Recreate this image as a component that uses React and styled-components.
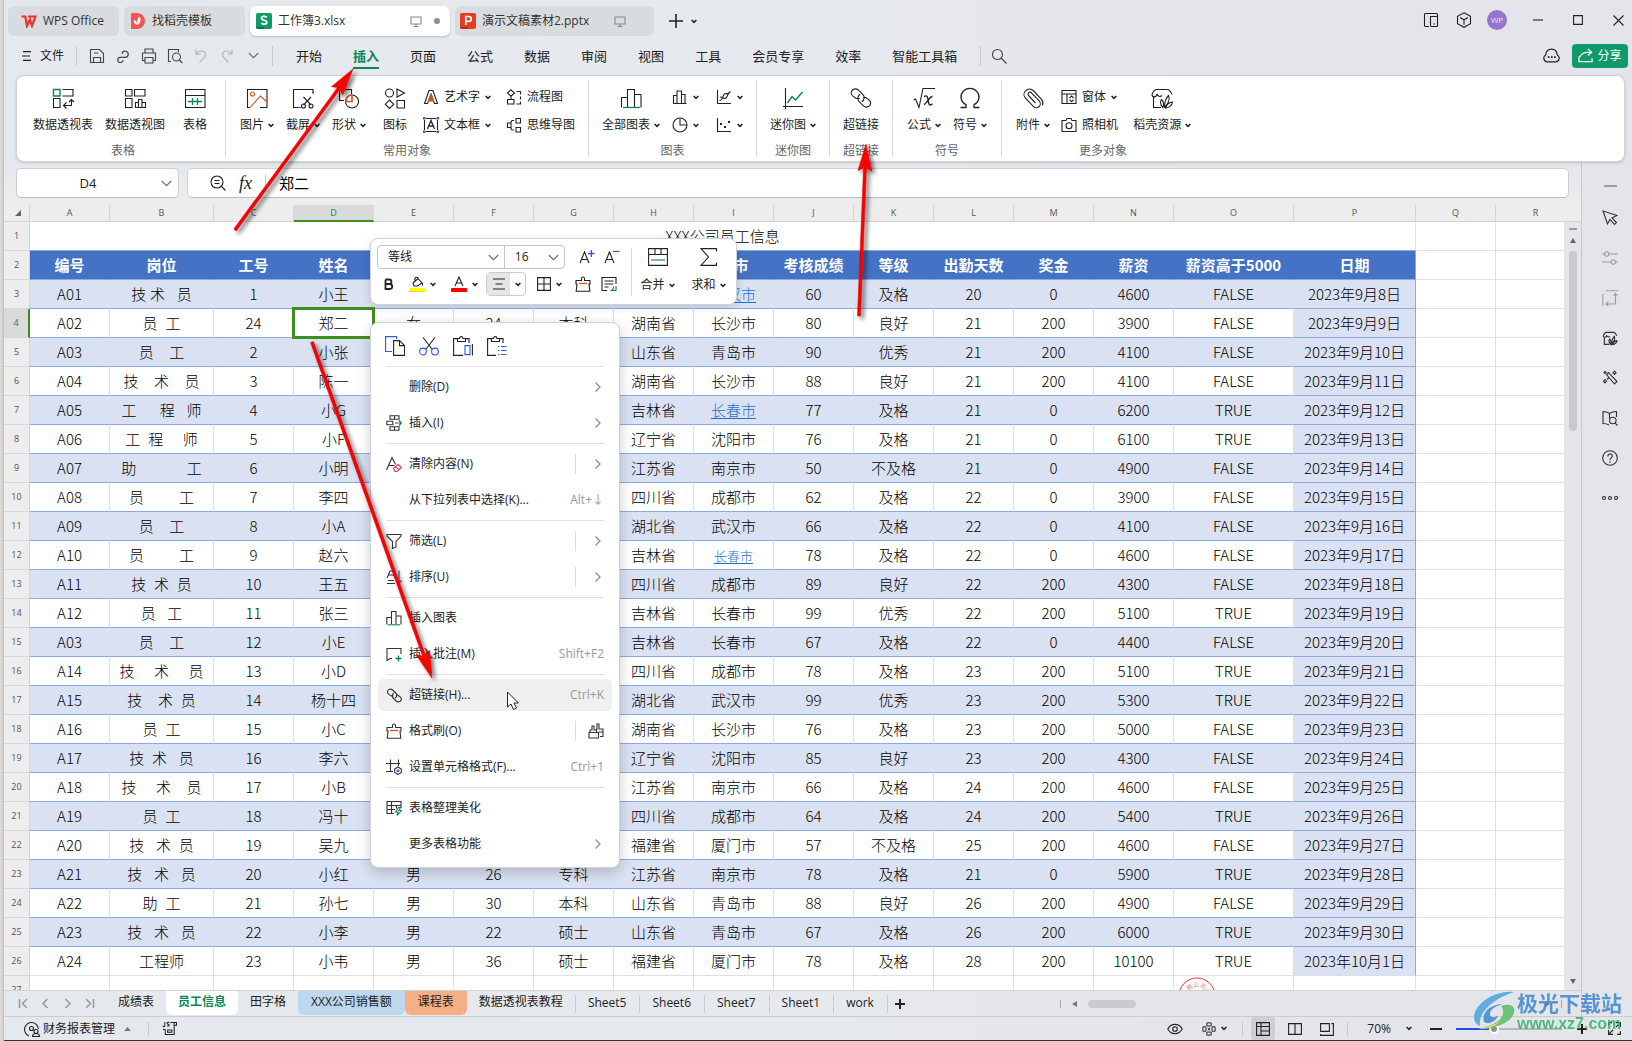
import React from 'react'
import styled, { createGlobalStyle, css } from 'styled-components'

const green = '#0b8457'
const blue = '#2b5cd9'
const orange = '#d4541c'
const uiFont = '"Open Sans", "Noto Sans CJK SC", sans-serif'
const cellFont = '"Noto Sans CJK SC", sans-serif'

const GlobalStyle = createGlobalStyle`
  * { box-sizing: border-box; }
  body { margin: 0; font-family: ${uiFont}; font-size: 12px; line-height: 18px; color: #222; }
  button, input, select { font: inherit; color: inherit; margin: 0; }
`

/* ---------- window ---------- */

const Desktop = styled.div`
  position: relative;
  height: 100vh;
  padding-left: 4px;
  overflow: hidden;
  background: linear-gradient(90deg, #e2dedb, #d2cecb 3px, #b4b6b8 4px);
`

const Window = styled.div`
  height: 100%;
  display: flex;
  flex-direction: column;
  background: linear-gradient(90deg, #e5e8ec, #e6e9ed 50%, #e4e5ea 75%);
`

const Body = styled.div`
  flex: 1;
  min-height: 0;
  display: flex;
`

const Main = styled.main`
  flex: 1;
  min-width: 0;
  display: flex;
  flex-direction: column;
`

const PlainButton = styled.button`
  display: flex;
  align-items: center;
  justify-content: center;
  padding: 0;
  border: none;
  background: none;
  cursor: pointer;
`

const Svg = styled.svg`
  display: block;
  flex: none;
  fill: none;
  stroke: currentColor;
  stroke-width: ${p => p.$stroke || 1.1};
`

const Spacer = styled.div`
  flex: 1;
`

const Divider = styled.span`
  flex: none;
  width: 1px;
  height: ${p => p.$height || 20}px;
  background: ${p => p.$color || '#c9cbce'};
`

/* ---------- title bar ---------- */

const TitleBar = styled.header`
  flex: none;
  height: 36px;
  padding: 6px 0 0 4px;
  display: flex;
  gap: 5px;
`

const FileTab = styled.button`
  display: flex;
  align-items: center;
  gap: 6px;
  width: ${p => p.$width}px;
  height: 30px;
  padding: 0 10px 0 ${p => p.$inset || 6}px;
  border: none;
  border-radius: 6px;
  background: ${p => (p.$active ? '#fff' : '#d9dcdf')};
  box-shadow: ${p => (p.$active ? '0 1px 2px rgba(0, 0, 0, 0.2)' : 'none')};
  text-align: left;
  white-space: nowrap;
  color: #333;
`

const TabName = styled.span`
  flex: 1;
`

const Dot = styled.span`
  width: 6px;
  height: 6px;
  margin-left: 6px;
  border-radius: 50%;
  background: #8d8f91;
`

const AddTab = styled.div`
  display: flex;
  align-items: center;
  gap: 8px;
  padding: 0 10px;
`

const WindowButtons = styled.div`
  display: flex;
  align-items: center;
  gap: ${p => (p.$controls ? 12 : 5)}px;
  margin-left: ${p => (p.$controls ? 8 : 0)}px;
  height: 28px;
`

const WindowButton = styled(PlainButton)`
  width: 28px;
  height: 28px;
`

const Avatar = styled.span`
  width: 20px;
  height: 20px;
  border-radius: 50%;
  background: #9575cd;
  color: #e9e0f7;
  font-size: 8px;
  line-height: 20px;
  text-align: center;
`

/* ---------- menu bar ---------- */

const MenuBar = styled.nav`
  flex: none;
  height: 39px;
  padding: 0 4px 0 18px;
  display: flex;
  align-items: center;
`

const FileMenu = styled(PlainButton)`
  gap: 8px;
  margin-right: 12px;
`

const QuickTools = styled.div`
  display: flex;
  align-items: center;
  padding: 0 6px 0 7px;
`

const QuickTool = styled(PlainButton)`
  width: ${p => (p.$wide ? 36 : 26)}px;
  height: 24px;
  color: ${p => (p.$off ? '#b0b2b5' : '#444')};
`

const MenuList = styled.div`
  display: flex;
  gap: 31px;
  margin: 0 23px;
`

const MenuTab = styled(PlainButton)`
  height: 26px;
  padding-top: 2px;
  border-bottom: 2px solid ${p => (p.$active ? green : 'transparent')};
  font-size: 13px;
  white-space: nowrap;
  font-weight: ${p => (p.$active ? 700 : 400)};
  color: ${p => (p.$active ? green : '#222')};
`

const ShareButton = styled(PlainButton)`
  gap: 4px;
  width: 56px;
  height: 24px;
  margin-left: 12px;
  border-radius: 4px;
  background: #0f9b69;
  color: #fff;
`

/* ---------- ribbon ---------- */

const Ribbon = styled.section`
  flex: none;
  height: 87px;
  margin: 0 7px 0 12px;
  display: flex;
  background: #fff;
  border: 1px solid #cfd1d6;
  border-radius: 8px;
  box-shadow: 0 1px 3px rgba(0, 0, 0, 0.16);
  position: relative;
`

const Group = styled.div`
  display: flex;
  flex-direction: column;
  padding: 0 13px;
  ${p => p.$roomy && css`padding: 0 12px 0 16px;`}
`

const GroupBody = styled.div`
  flex: 1;
  display: flex;
  gap: ${p => p.$gap || 10}px;
`

const GroupTitle = styled.div`
  text-align: center;
  color: #666;
  padding-bottom: 1px;
`

const GroupLine = styled.span`
  width: 1px;
  margin: 4px 0;
  background: #d9dbde;
`

const BigTool = styled.button`
  display: flex;
  flex-direction: column;
  align-items: center;
  gap: 6px;
  min-width: 36px;
  padding: 10px 0 0;
  border: none;
  background: none;
  white-space: nowrap;
`

const BigLabel = styled.span`
  display: flex;
  align-items: center;
  gap: 4px;
`

const ToolStack = styled.div`
  display: flex;
  flex-direction: column;
  padding: 7px 5px 0 0;
  &:last-child { padding-right: 0; }
`

const SmallTool = styled(PlainButton)`
  justify-content: flex-start;
  gap: 5px;
  height: 28px;
  white-space: nowrap;
`

/* ---------- formula bar ---------- */

const FormulaBar = styled.div`
  flex: none;
  display: flex;
  gap: 8px;
  padding: 6px 12px 7px;
  background: linear-gradient(180deg, rgba(238, 238, 238, 0), #ededed);
`

const NameBox = styled.div`
  display: flex;
  align-items: center;
  width: 163px;
  height: 30px;
  padding: 0 6px 0 8px;
  background: #fff;
  border: 1px solid #cdcfd1;
  border-bottom-color: #b9bbbd;
  border-radius: 5px;
`

const NameInput = styled.input`
  flex: 1;
  min-width: 0;
  padding: 0 10px 0 0;
  border: none;
  outline: none;
  background: none;
  text-align: center;
  font-size: 13px;
`

const FormulaBox = styled(NameBox)`
  flex: 1;
  gap: 13px;
  padding-left: 22px;
`

const FormulaMark = styled.span`
  font-family: "Liberation Serif", serif;
  font-style: italic;
  font-size: 18px;
`

const FormulaInput = styled.input`
  flex: 1;
  padding: 0;
  border: none;
  outline: none;
  background: none;
  font-family: ${cellFont};
  font-size: 15px;
  color: #000;
`

/* ---------- sheet ---------- */

const SheetArea = styled.div`
  flex: 1;
  min-height: 0;
  display: flex;
`

const TableWrap = styled.div`
  flex: 1;
  min-width: 0;
  overflow: hidden;
  background: #fff;
`

const Grid = styled.table`
  width: 100%;
  table-layout: fixed;
  border-collapse: separate;
  border-spacing: 0;
  font-family: ${cellFont};
  font-size: 15px;
  line-height: 20px;
  color: #000;
`

const ColHead = styled.th`
  height: 17px;
  padding: 0;
  background: ${p => (p.$active ? '#dadada' : '#ededed')};
  border-right: 1px solid ${p => (p.$active ? '#dadada' : '#d4d4d4')};
  border-bottom: ${p => (p.$active ? '2px solid #3f8f1f' : '1px solid #d4d4d4')};
  font-family: ${uiFont};
  font-size: 9px;
  line-height: 12px;
  font-weight: 400;
  color: ${p => (p.$active ? green : '#555')};
`

const Corner = styled(ColHead)`
  text-align: right;
  padding-right: 8px;
`

const RowHead = styled.th`
  height: 29px;
  padding: 0;
  background: ${p => (p.$active ? '#dadada' : '#ededed')};
  border-right: ${p => (p.$active ? '2px solid #3f8f1f' : '1px solid #d4d4d4')};
  border-bottom: 1px solid #d8d8d8;
  font-family: ${uiFont};
  font-size: 9px;
  font-weight: 400;
  color: ${p => (p.$active ? green : '#555')};
`

const Cell = styled.td`
  position: relative;
  height: 29px;
  padding: 0;
  text-align: center;
  white-space: pre;
  font-weight: 300;
  border-right: 1px solid #e1e1e1;
  border-bottom: 1px solid #e1e1e1;
  ${p => p.$data && css`border-bottom-color: #8ea9db;`}
  ${p => p.$last && css`border-bottom-color: #dcdfe6;`}
  ${p => p.$band && css`background: #d9e1f2; border-right-color: #d9e1f2;`}
  ${p => p.$head && css`
    background: #4472c4;
    border-right-color: #4472c4;
    color: #fff;
    font-weight: 700;
  `}
  ${p => p.$edge && css`border-right-color: #8ea9db;`}
  ${p => p.$spaced && css`font-family: ${uiFont};`}
`

const Selection = styled.span`
  position: absolute;
  z-index: 1;
  inset: -2px;
  border: 3px solid #3f8f1f;
`

const CityLink = styled.a`
  color: #1c73c7;
  font-size: ${p => (p.$small ? 13 : 15)}px;
  text-underline-offset: 2px;
`

const Seal = styled.svg`
  position: absolute;
  left: 4px;
  top: 1px;
  fill: none;
  stroke: #e03a3a;
`

const VScroll = styled.div`
  width: 17px;
  display: flex;
  flex-direction: column;
  align-items: center;
  gap: 8px;
  padding: 6px 0;
  margin-top: 16px;
  border-top: 1px solid #d4d4d4;
  color: #777;
  box-shadow: 0 -16px 0 #ededed;
`

const VThumb = styled.span`
  width: 8px;
  height: 180px;
  border-radius: 4px;
  background: #c9cacd;
`

const Dash = styled.span`
  width: ${p => p.$width}px;
  height: 2px;
  background: #9a9ca0;
`

const SideBar = styled.aside`
  flex: none;
  width: 51px;
  padding: 12px 0 0 6px;
  display: flex;
  flex-direction: column;
  align-items: center;
  border-left: 1px solid #c8cace;
`

const SideButton = styled(PlainButton)`
  width: 40px;
  height: ${p => (p.$short ? 24 : 40)}px;
  color: ${p => (p.$off ? '#9b9da2' : '#333')};
`

/* ---------- sheet tabs and status ---------- */

const SheetBar = styled.div`
  flex: none;
  height: 26px;
  display: flex;
  border-top: 1px solid #d0d2d4;
`

const SheetNav = styled.div`
  display: flex;
  align-items: center;
  width: 102px;
  padding-left: 8px;
  color: #9a9c9f;
`

const SheetNavButton = styled(PlainButton)`
  width: 22px;
  height: 24px;
`

const SheetTab = styled.button`
  height: 24px;
  padding: 0 12px 2px;
  border: none;
  border-radius: 0 0 6px 6px;
  background: ${p => p.$tint || 'none'};
  font-weight: ${p => (p.$active ? 700 : 400)};
  color: ${p => (p.$active ? green : '#222')};
  white-space: nowrap;
  ${p => p.$tint && !p.$active && css`padding: 0 13px 2px;`}
  ${p => p.$ruled && css`
    height: 18px;
    margin-top: 4px;
    padding: 0 13px 2px 12px;
    border-left: 1px solid #c9cbce;
    border-radius: 0;
    line-height: 16px;
  `}
`

const AddSheet = styled(PlainButton)`
  height: 18px;
  margin-top: 4px;
  padding: 0 7px;
  border-left: 1px solid #c9cbce;
`

const HScroll = styled.div`
  width: 502px;
  display: flex;
  align-items: center;
  gap: 11px;
  margin-right: 19px;
  color: #777;
`

const HThumb = styled.span`
  width: 48px;
  height: 8px;
  border-radius: 4px;
  background: #c9cacd;
`

const StatusBar = styled.footer`
  flex: none;
  height: 25px;
  display: flex;
  align-items: center;
  padding: 0 2px 0 19px;
  border-top: 1px solid #c9cbce;
  border-bottom: 1px solid #1f3b40;
`

const StatusLine = styled(Divider)`
  margin: 0 4px;
  height: 14px;
`

const StatusButton = styled(PlainButton)`
  gap: 5px;
  min-width: 24px;
  height: 23px;
  margin: 0 4px;
  padding: 0 ${p => (p.$spread ? 7 : 0)}px;
  border-radius: 3px;
  background: ${p => (p.$active ? '#cdcfd2' : 'none')};
`

const ReportButton = styled(StatusButton)`
  margin: 0 9px 0 0;
  gap: 2px;
`

const ZoomSelect = styled(StatusButton)`
  gap: 15px;
  margin: 0 8px 0 15px;
`

const ZoomRange = styled.input`
  appearance: none;
  width: 106px;
  height: 16px;
  margin: 0 4px;
  background: linear-gradient(90deg, #1f52e0 34%, #b5b8bc 34%) center / 100% 2px no-repeat;
  &::-webkit-slider-thumb {
    appearance: none;
    width: 10px;
    height: 10px;
    border: 2px solid #fff;
    border-radius: 50%;
    background: #8f9296;
  }
`

/* ---------- floating toolbar ---------- */

const FloatBar = styled.div`
  position: absolute;
  z-index: 3;
  left: 370px;
  top: 238px;
  width: 367px;
  height: 67px;
  display: flex;
  padding: 6px 0 0 6px;
  background: #fff;
  border: 1px solid #cfd2d8;
  border-radius: 8px;
  box-shadow: 0 2px 10px rgba(0, 0, 0, 0.14);
`

const FloatRows = styled.div`
  width: 248px;
`

const FloatRow = styled.div`
  display: flex;
  align-items: center;
  height: 24px;
  margin-bottom: 3px;
`

const SelectBox = styled.label`
  display: grid;
  align-items: center;
  width: ${p => p.$width}px;
  height: 24px;
  border: 1px solid #c2c4c8;
  border-radius: ${p => (p.$left ? '4px 0 0 4px' : '0 4px 4px 0')};
  margin-right: ${p => (p.$left ? -1 : 9)}px;
  & > * { grid-area: 1 / 1; }
  & > svg { justify-self: end; margin-right: 5px; pointer-events: none; }
`

const Select = styled.select`
  appearance: none;
  height: 22px;
  padding: 0 10px;
  border: none;
  outline: none;
  background: none;
`

const FloatTool = styled(PlainButton)`
  gap: 5px;
  width: ${p => p.$width}px;
  height: 24px;
`

const AlignTool = styled.div`
  display: flex;
  width: 40px;
  height: 24px;
  margin: 0 2px 0 1px;
  border: 1px solid #c9cbce;
  border-radius: 4px;
  & > button:first-child { width: 23px; background: #e4e5e6; }
  & > button:last-child { width: 15px; }
`

const FloatSide = styled.div`
  display: flex;
  flex: 1;
  height: 48px;
  margin: 3px 2px 0 6px;
  border-left: 1px solid #d3d5d8;
`

const FloatBig = styled.button`
  flex: 1;
  display: flex;
  flex-direction: column;
  align-items: center;
  gap: 10px;
  padding: 0;
  border: none;
  background: none;
`

/* ---------- context menu ---------- */

const ContextMenu = styled.div`
  position: absolute;
  z-index: 4;
  left: 370px;
  top: 322px;
  width: 250px;
  display: flex;
  flex-direction: column;
  padding-bottom: 5px;
  background: #fff;
  border: 1px solid #cfd2d8;
  border-radius: 8px;
  box-shadow: 0 4px 14px rgba(0, 0, 0, 0.2);
`

const ClipRow = styled.div`
  display: flex;
  gap: 10px;
  height: 41px;
  padding: 4px 12px 0;
`

const ClipButton = styled(PlainButton)`
  width: 24px;
`

const MenuLine = styled.div`
  height: 1px;
  margin: 2px 15px;
  background: #dfe0e2;
`

const MenuItem = styled.button`
  display: flex;
  align-items: center;
  gap: 7px;
  height: 32px;
  margin: 2px 7px;
  padding: 0 8px;
  border: none;
  border-radius: 5px;
  background: ${p => (p.$hover ? '#efefef' : 'none')};
  text-align: left;
  white-space: nowrap;
`

const ItemIcon = styled.span`
  width: 16px;
  color: #333;
`

const Shortcut = styled.span`
  color: #999;
`

const ItemTail = styled.span`
  display: flex;
  justify-content: flex-end;
  width: 29px;
  height: 20px;
  align-items: center;
  color: #8b8d90;
  border-left: 1px solid ${p => (p.$split ? '#d9dbdd' : 'transparent')};
`

/* ---------- marks lying over the page ---------- */

const Marks = styled.svg`
  position: absolute;
  z-index: 5;
  inset: 0;
  width: 100%;
  height: 100%;
  pointer-events: none;
`

const Brand = styled.div`
  position: absolute;
  z-index: 6;
  right: 10px;
  bottom: 7px;
  display: flex;
  gap: 2px;
  opacity: 0.85;
  pointer-events: none;
`

const BrandText = styled.div`
  color: #34b368;
  font: 700 16px/20px "Liberation Sans", sans-serif;
`

const BrandName = styled.div`
  color: #4088cc;
  font: 700 21px/24px ${cellFont};
`

/* ---------- icons ---------- */

const Icon = ({ s = 16, box = s, stroke, children }) => (
  <Svg width={s} height={s} viewBox={`0 0 ${box} ${box}`} $stroke={stroke}>{children}</Svg>
)

const Chev = () => (
  <Svg width="6" height="5" viewBox="0 0 6 5" $stroke={1.5}><path d="M.6 1l2.400 2.400L5.400 1" /></Svg>
)

const ChevDown = () => (
  <Svg width="11" height="7" viewBox="0 0 11 7" color="#6b6d70"><path d="M.8 1l4.700 4.700L10.200 1" /></Svg>
)

const big = {
  pivot: <><path stroke={green} strokeWidth="1.400" d="M2.500 3.500H9V10H2.500z" /><path d="M11.500 3.500h10.500v6.500h-10.500M2.500 12.500H9v9H2.500zM12.500 19.500h8v-6M15.500 16.500l-3 3 3 3M18 16l2.500-2.500L23 16" /></>,
  pivotChart: <><path d="M2.500 3.500H9V10H2.500zM11.500 10V3.500H22V10zM2.500 12.500H9v9H2.500zM12.500 21.500v-5h3v5zM15.500 21.500v-8h3.500v8zM19 16.500h3.500v5H12" /></>,
  table: <><path d="M2.500 3.500h19.500v18H2.500zM2.500 9.500H22" /><path stroke={green} strokeWidth="1.300" d="M5 15.500h14M9.500 12v7M14.500 12v7" /></>,
  picture: <><path d="M5 21.500H2.500v-18H22v18h-7" /><circle cx="7.500" cy="8" r="2" stroke={orange} /><path stroke={orange} d="M5 21.500L15.500 10l6.500 6" /></>,
  snip: <><path d="M8 21.500H2.500v-18h19.500V7M12.500 11l7.500 8M20 11l-7.500 8" /><circle cx="12.500" cy="20" r="2" /><circle cx="20" cy="20" r="2" /><path stroke={blue} d="M22 5v3M7 21.500h3" /></>,
  shapes: <><path d="M7 14.500H2.500v-11h12V8" /><circle cx="15" cy="15.500" r="6.500" /><path stroke={orange} strokeWidth="1.600" d="M9 15.500h6V9c-4 0-6 3-6 6.500z" /></>,
  marks: <><circle cx="6.500" cy="7" r="4" /><path d="M14 3l7.500 4L14 11zM6.500 14l4.200 4.200-4.200 4.200-4.200-4.200zM14 14.500h7.500V22H14z" /></>,
  bars: <><path d="M2.500 21.500v-10H8.500v10M8.500 11.500v-8h7v18M15.500 8.500H22v13" /><path stroke={green} strokeWidth="1.300" d="M4 21.500h17" /></>,
  spark: <><path d="M4.500 2v21M2 20.500h20" /><path stroke={green} strokeWidth="1.400" d="M6.500 17l4.500-6.500 3.500 3.500L21.500 6" /></>,
  link: <><path d="M10.500 12.500H7.200C3.500 10.500 1.800 8.500 2.200 6.200c.6-3.300 4.800-4.300 7.200-2l4.200 3.900c2.400 2.300 2 5.900-.8 7.600" /><path d="M14.500 11.500h2.200c3.500 2 5.300 4 4.900 6.300-.6 3.300-4.800 4.300-7.200 2l-4-3.900c-2.400-2.300-2-5.700.6-7.600" /></>,
  sqrt: <><path d="M1.500 14l2-1 3.500 8.500L11 2.500h12" /><path d="M12 10.500c3-1.500 3.500 0 4 3l.8 4c.5 2 2 2 3.700.3M20.500 10.500c-3-.5-5.500 7.500-8.500 8" strokeWidth="1.400" /></>,
  omega: <path d="M2.500 21.500h5.500v-2.800A9 8.600 0 1 1 16 18.700v2.800h5.500" strokeWidth="1.300" />,
  clip: <path d="M14.500 17L7.500 9.500a2 2 0 0 1 3-2.700l7.800 8.300a4 4 0 0 1-6 5.300L4.200 12a5.500 5.500 0 0 1 8-7.500l8.300 8.900a6 6 0 0 1 1 6" />,
  store: <><path d="M3.500 11v10.500h7.500M2 8.500C3 6 4 3.500 6.500 3.500h11c2.500 0 3.500 3 4.500 5M2 8.500c0 3 4.500 3.500 5-.5.500 2 3 3.500 5 1.500" /><path d="M13 21.500c-3-3-3-6-1.500-8 2 2 2.500 5 1.500 8zM14.500 21c0-5 1-8.500 4-11.500 1.500 4-.5 8.500-4 11.500zM15.500 22c1-3.500 3.500-5.500 7-6-.5 3.500-3 5.500-7 6z" /></>,
}

const small = {
  art: <><path d="M1.500 14.500L6 1.500h4l4.500 13h-3L8 5 4.500 14.500z" /><path fill={orange} stroke={orange} d="M5.500 12h5L8 6z" /></>,
  textbox: <><path d="M3 1.500h10M3 14.500h10M1.500 3v10M14.500 3v10" /><path d="M4.500 12L8 3.500l3.500 8.500M6 9h4" strokeWidth="1.300" /><path stroke="none" fill={blue} d="M0 0h2.500v2.500H0zM13.500 0H16v2.500h-2.500zM0 13.500h2.500V16H0zM13.500 13.500H16V16h-2.500z" /></>,
  flow: <><path d="M5 .8L8.500 4 5 7.200 1.500 4zM1.500 10.500H8V15H1.500zM5 7.200v3.300M10.500 2.500h4v3M14.500 7.500v3M14.500 12.500V15h-4" /></>,
  mind: <><path d="M10 1.500h4.500V6H10zM10 10.500h4.500V15H10zM8 3.500H6.500C5 3.500 5 6 5 6M8 13H6.500C5 13 5 10.500 5 10.500M5 6H1.500v4.500H5z" /></>,
  column: <><path d="M1.500 14V6.500H5V14M5 6.500V2h4.500v12M9.500 5.500H13V14M1 14.500h13.500" /></>,
  pie: <><circle cx="8" cy="8" r="7" /><path d="M8 1v7h7" /></>,
  line: <><path d="M1.500 1v13.500H15M3.500 11.500c4 0 3-7 6-7 2 0 2 1 4-1M4 8c3-.5 4 3 6 1s1-4 4.500-6.500" /></>,
  scatter: <><path d="M1.500 1v13.500H15" /><path stroke="none" fill="currentColor" d="M4 6h2v2H4zM8 9h2v2H8zM12 4h2v2h-2z" /></>,
  form: <><path d="M1 1.500h14v13H1zM1 5h14M6 5v9.500M8.500 9l2-2 2 2M8.500 10.700l2 2 2-2" /></>,
  camera: <><path d="M1 3.500h4L6 1.500h4l1 2h4v11H1z" /><circle cx="8" cy="8.800" r="3" /></>,
}

const menuIcon = {
  insert: <><path d="M4 .8h4.500v3.500H4zM8.500.8H13v3.500H8.500M.8 6.200h6v3.600h-6zM4 11.800h4.500v3.500H4zM8.500 11.800H13v3.500H8.500" /><path stroke={green} d="M9 8h6.500M13 5.500L15.500 8 13 10.500" /></>,
  clear: <><path d="M.5 14L6 1.500l3.500 7M2.500 9.500h6" /><path stroke="#d4405c" d="M7.500 12.500l4.500-4 3.500 3-4.500 4H9zM9.500 10.700l3.500 3.200" /></>,
  filter: <path d="M1 1.500h14v1.500l-5 5.500v5.500l-3.500 1.500V8.500L1 3z" />,
  sort: <><path d="M1 9l3-7h3l2 7M2 6h6M1 14.500h8M2 11.500h6" /><path stroke={blue} d="M13 1.500v12.500M10.500 11.500l2.500 2.500 2.500-2.500" /></>,
  chart: <><path d="M.8 14.500V7.500H5.500M5.500 14V1.500h4.500V14M10 6h5v8.500" /><path stroke={green} d="M2 14.800h12" /></>,
  note: <><path d="M6 12.500H4L1 14.500V2.500h14V8" /><path stroke={green} strokeWidth="1.400" d="M9.500 12.500h6M12.500 9.500v6" /></>,
  brush: <><path d="M6.500 4.500v-2a1.500 1.500 0 0 1 3 0v2h5.500v3.500h-1l.8 7.200H1.200L2 8H1V4.500z" /><path stroke={orange} strokeWidth="1.300" d="M4 7.500h8" /></>,
  format: <><path d="M4.500.5V13M0 4.500h14M12.500.5V7M0 12.500h7" /><path d="M12 8l3.300 2v3.500L12 15.500l-3.300-2V10z" /><circle cx="12" cy="11.800" r="1" stroke={blue} /></>,
  tidy: <><path d="M8 13.500H1V1.500h14V8M1 5.500h14M1 9.500h8M5.500 1.500v12M10.500 5.500v3" /><path stroke={green} fill="#fff" d="M12.500 7.500l-3 4.500h2.500l-1 3.500 4.500-5h-2.500l1.500-3z" /></>,
  brushes: <><path d="M1 9.500h9.500V15H1zM2 9V7h2V3h2v4h2.500v2M8 6h1V1h2v5h4v7.500h-3M11 9h4" /></>,
}

/* ---------- data ---------- */

const letters = 'ABCDEFGHIJKLMNOPQR'.split('')
const widths = [80, 104, 80, 80, 80, 80, 80, 80, 80, 80, 80, 80, 80, 80, 120, 122, 80, 80]
const headings = ['编号', '岗位', '工号', '姓名', '', '', '', '', '城市', '考核成绩', '等级', '出勤天数', '奖金', '薪资', '薪资高于5000', '日期']

const staff = [
  ['A01', '技 术   员', 1, '小王', '', '', '', '', '武汉市', 60, '及格', 20, 0, 4600, 'FALSE', '2023年9月8日'],
  ['A02', '员  工', 24, '郑二', '女', 24, '本科', '湖南省', '长沙市', 80, '良好', 21, 200, 3900, 'FALSE', '2023年9月9日'],
  ['A03', '员    工', 2, '小张', '', '', '', '山东省', '青岛市', 90, '优秀', 21, 200, 4100, 'FALSE', '2023年9月10日'],
  ['A04', '技    术    员', 3, '陈一', '', '', '', '湖南省', '长沙市', 88, '良好', 21, 200, 4100, 'FALSE', '2023年9月11日'],
  ['A05', '工      程   师', 4, '小G', '', '', '', '吉林省', '长春市', 77, '及格', 21, 0, 6200, 'TRUE', '2023年9月12日'],
  ['A06', '工  程     师', 5, '小F', '', '', '', '辽宁省', '沈阳市', 76, '及格', 21, 0, 6100, 'TRUE', '2023年9月13日'],
  ['A07', '助             工', 6, '小明', '', '', '', '江苏省', '南京市', 50, '不及格', 21, 0, 4900, 'FALSE', '2023年9月14日'],
  ['A08', '员         工', 7, '李四', '', '', '', '四川省', '成都市', 62, '及格', 22, 0, 3900, 'FALSE', '2023年9月15日'],
  ['A09', '员    工', 8, '小A', '', '', '', '湖北省', '武汉市', 66, '及格', 22, 0, 4100, 'FALSE', '2023年9月16日'],
  ['A10', '员         工', 9, '赵六', '', '', '', '吉林省', '长春市', 78, '及格', 22, 0, 4600, 'FALSE', '2023年9月17日'],
  ['A11', '技  术  员', 10, '王五', '', '', '', '四川省', '成都市', 89, '良好', 22, 200, 4300, 'FALSE', '2023年9月18日'],
  ['A12', '员   工', 11, '张三', '', '', '', '吉林省', '长春市', 99, '优秀', 22, 200, 5100, 'TRUE', '2023年9月19日'],
  ['A03', '员    工', 12, '小E', '', '', '', '吉林省', '长春市', 67, '及格', 22, 0, 4400, 'FALSE', '2023年9月20日'],
  ['A14', '技     术     员', 13, '小D', '', '', '', '四川省', '成都市', 78, '及格', 23, 200, 5100, 'TRUE', '2023年9月21日'],
  ['A15', '技    术  员', 14, '杨十四', '', '', '', '湖北省', '武汉市', 99, '优秀', 23, 200, 5300, 'TRUE', '2023年9月22日'],
  ['A16', '员  工', 15, '小C', '', '', '', '湖南省', '长沙市', 76, '及格', 23, 200, 5000, 'FALSE', '2023年9月23日'],
  ['A17', '技  术   员', 16, '李六', '', '', '', '辽宁省', '沈阳市', 85, '良好', 23, 200, 4300, 'FALSE', '2023年9月24日'],
  ['A18', '技     术    员', 17, '小B', '', '', '', '江苏省', '南京市', 66, '及格', 24, 200, 4600, 'FALSE', '2023年9月25日'],
  ['A19', '员  工', 18, '冯十', '', '', '', '四川省', '成都市', 64, '及格', 24, 200, 5400, 'TRUE', '2023年9月26日'],
  ['A20', '技   术  员', 19, '吴九', '', '', '', '福建省', '厦门市', 57, '不及格', 25, 200, 4600, 'FALSE', '2023年9月27日'],
  ['A21', '技   术   员', 20, '小红', '男', 26, '专科', '江苏省', '南京市', 78, '及格', 21, 0, 5900, 'TRUE', '2023年9月28日'],
  ['A22', '助  工', 21, '孙七', '男', 30, '本科', '山东省', '青岛市', 88, '良好', 26, 200, 4900, 'FALSE', '2023年9月29日'],
  ['A23', '技   术   员', 22, '小李', '男', 22, '硕士', '山东省', '青岛市', 67, '及格', 26, 200, 6000, 'TRUE', '2023年9月30日'],
  ['A24', '工程师', 23, '小韦', '男', 36, '硕士', '福建省', '厦门市', 78, '及格', 28, 200, 10100, 'TRUE', '2023年10月1日'],
]

const linkedRows = [3, 7, 12]

const menus = ['开始', '插入', '页面', '公式', '数据', '审阅', '视图', '工具', '会员专享', '效率', '智能工具箱']

const sheets = [
  { name: '成绩表' },
  { name: '员工信息', active: true, tint: '#fff' },
  { name: '田字格' },
  { name: 'XXX公司销售额', tint: '#bdd7ee' },
  { name: '课程表', tint: '#f4b084' },
  { name: '数据透视表教程' },
  { name: 'Sheet5', ruled: true },
  { name: 'Sheet6', ruled: true },
  { name: 'Sheet7', ruled: true },
  { name: 'Sheet1', ruled: true },
  { name: 'work', ruled: true },
]

const menuSections = [
  [{ text: '删除(D)', more: true }, { text: '插入(I)', icon: 'insert', more: true }],
  [{ text: '清除内容(N)', icon: 'clear', more: true, split: true }, { text: '从下拉列表中选择(K)...', keys: 'Alt+↓' }],
  [{ text: '筛选(L)', icon: 'filter', more: true, split: true }, { text: '排序(U)', icon: 'sort', more: true, split: true }],
  [{ text: '插入图表', icon: 'chart' }, { text: '插入批注(M)', icon: 'note', keys: 'Shift+F2' }],
  [
    { text: '超链接(H)...', icon: 'linkItem', keys: 'Ctrl+K', hover: true },
    { text: '格式刷(O)', icon: 'brush', split: true, brushes: true },
    { text: '设置单元格格式(F)...', icon: 'format', keys: 'Ctrl+1' },
  ],
  [{ text: '表格整理美化', icon: 'tidy' }, { text: '更多表格功能', more: true }],
]

/* ---------- parts ---------- */

const Screen = () => (
  <Svg width="12" height="11" viewBox="0 0 12 11" color="#85878a"><path d="M1 1h10v7H1zM6 8v2.500M3.500 10.500h5" /></Svg>
)

const TitleRow = () => (
  <TitleBar>
    <FileTab $width={111} $inset={13}>
      <Svg width="16" height="13" viewBox="0 0 16 13" color="#e8352c" $stroke={2.2}><path d="M.5 1.500h3.800l1.700 9.500L9 4.500 11 11l3.500-9.500H7" /></Svg>
      <TabName>WPS Office</TabName>
    </FileTab>
    <FileTab $width={121}>
      <Svg width="16" height="16" viewBox="0 0 16 16">
        <path stroke="none" fill="#f0555a" d="M2 0h5a8 8 0 0 1 0 16H1V1z" />
        <path stroke="none" fill="#fff" d="M7 12C4 11 3.500 9 4 7c2 .5 3 2 3 5zM7.500 12c-1-4 0-6.500 2-8.500 2 3.500 1 6.500-2 8.500z" />
      </Svg>
      <TabName>找稻壳模板</TabName>
    </FileTab>
    <FileTab $width={200} $active>
      <Svg width="16" height="16" viewBox="0 0 16 16">
        <rect stroke="none" width="16" height="16" rx="2" fill="#109a68" />
        <path stroke="none" fill="#0b6f49" d="M0 14h8v2H1z" />
        <path stroke="#fff" strokeWidth="1.700" d="M10.800 4.300C9.500 3 5.500 2.800 5.500 5.200c0 2.600 5.300 1.400 5.300 4 0 2.400-4 2.400-5.500.9" />
      </Svg>
      <TabName>工作簿3.xlsx</TabName>
      <Screen />
      <Dot />
    </FileTab>
    <FileTab $width={199} $inset={5}>
      <Svg width="16" height="16" viewBox="0 0 16 16">
        <rect stroke="none" width="16" height="16" rx="2" fill="#e33e22" />
        <path stroke="none" fill="#b32c15" d="M0 14h8v2H1z" />
        <path stroke="#fff" strokeWidth="1.700" d="M5.800 12V3.500h3a2.400 2.400 0 0 1 0 4.900h-3" />
      </Svg>
      <span>演示文稿素材2.pptx</span>
      <Spacer />
      <Screen />
      <Spacer />
    </FileTab>
    <AddTab>
      <PlainButton aria-label="+"><Icon s={14} stroke={1.6}><path d="M7 0v14M0 7h14" /></Icon></PlainButton>
      <Chev />
    </AddTab>
    <Spacer />
    <WindowButtons>
      <WindowButton><Icon s={16}><path d="M6 14.500H2.500c-.7 0-1-.3-1-1v-11c0-.7.3-1 1-1h11c.7 0 1 .3 1 1v11c0 .7-.3 1-1 1H8M7.500 14.500V4.500h7M10.500 12h1.500" /></Icon></WindowButton>
      <WindowButton><Icon s={16}><path d="M8 .8l6.500 3.500v7.400L8 15.300l-6.500-3.600V4.300zM4 5.500l4 2.300 4-2.300M8 7.800v5" /></Icon></WindowButton>
      <WindowButton><Avatar>WP</Avatar></WindowButton>
    </WindowButtons>
    <WindowButtons $controls>
      <WindowButton><Icon s={10}><path d="M0 5h10" /></Icon></WindowButton>
      <WindowButton><Icon s={10}><path d="M.6.600h8.800v8.800H.6z" /></Icon></WindowButton>
      <WindowButton><Icon s={11}><path d="M.5.500l10 10M10.500.500l-10 10" /></Icon></WindowButton>
    </WindowButtons>
  </TitleBar>
)

const MenuRow = () => (
  <MenuBar>
    <FileMenu>
      <Icon s={10}><path d="M1 .6h8M0 5h8M1 9.400h8" /></Icon>
      文件
    </FileMenu>
    <Divider />
    <QuickTools>
      <QuickTool><Icon><path d="M1.500 1.500h9l4 4v9h-13zM4.500 14.500V9.500h7v5M5 5h4" /></Icon></QuickTool>
      <QuickTool><Icon s={14} box={16}><path d="M7 5.500a3.500 3.500 0 1 1 3.500 4H5a3 3 0 1 0 3 3" strokeWidth="1.300" /></Icon></QuickTool>
      <QuickTool><Icon><path d="M4 5V1h8v4M4 12.500H1.500V5h13v7.500H12M4 9.500h8V15H4z" /></Icon></QuickTool>
      <QuickTool><Icon><path d="M4 13.500H1.500v-12h10V4" /><circle cx="9.500" cy="9" r="4" /><path d="M12.300 12l3 3" /></Icon></QuickTool>
      <QuickTool $off><Icon><path d="M3 1.500v4.500h4.500M3.500 5.500C6 2 12 2 12.500 6.500c0 3-3 4.500-6 8" /></Icon></QuickTool>
      <QuickTool $off><Icon><path d="M13 1.500v4.500H8.500M12.500 5.500C10 2 4 2 3.500 6.500c0 3 3 4.500 6 8" /></Icon></QuickTool>
      <QuickTool><ChevDown /></QuickTool>
    </QuickTools>
    <Divider />
    <MenuList>
      {menus.map(name => <MenuTab key={name} $active={name === '插入'}>{name}</MenuTab>)}
    </MenuList>
    <Divider />
    <QuickTool $wide><Icon><circle cx="6.500" cy="6.500" r="5" /><path d="M10 10l5.500 5.500" /></Icon></QuickTool>
    <Spacer />
    <PlainButton><Icon s={17} box={16}><path d="M4 14a3.500 3.500 0 0 1-1.500-6.500C3 3.500 5 2 8 2s5 1.500 5.500 5.500A3.500 3.500 0 0 1 12 14z" /><path strokeWidth="1.600" strokeDasharray="1.600 1.400" d="M4.500 9.500h8" /></Icon></PlainButton>
    <ShareButton>
      <Icon s={15} box={16} stroke={1.3}><path d="M1 9v5.500h14V11M2 9.500C3 6 6 4.500 14 4.500M10.500 1L14.500 4.500 10.500 8" /></Icon>
      分享
    </ShareButton>
  </MenuBar>
)

const Big = ({ icon, label, drop }) => (
  <BigTool>
    <Icon s={24}>{big[icon]}</Icon>
    <BigLabel>{label}{drop && <Chev />}</BigLabel>
  </BigTool>
)

const Small = ({ icon, label, drop }) => (
  <SmallTool>
    <Icon>{small[icon]}</Icon>
    {label}
    {drop && <Chev />}
  </SmallTool>
)

const RibbonGroup = ({ title, roomy, gap, children }) => (
  <Group $roomy={roomy}>
    <GroupBody $gap={gap}>{children}</GroupBody>
    <GroupTitle>{title}</GroupTitle>
  </Group>
)

const RibbonBar = () => (
  <Ribbon>
    <RibbonGroup title="表格" roomy gap={12}>
      <Big icon="pivot" label="数据透视表" />
      <Big icon="pivotChart" label="数据透视图" />
      <Big icon="table" label="表格" />
    </RibbonGroup>
    <GroupLine />
    <RibbonGroup title="常用对象">
      <Big icon="picture" label="图片" drop />
      <Big icon="snip" label="截屏" drop />
      <Big icon="shapes" label="形状" drop />
      <Big icon="marks" label="图标" />
      <ToolStack>
        <Small icon="art" label="艺术字" drop />
        <Small icon="textbox" label="文本框" drop />
      </ToolStack>
      <ToolStack>
        <Small icon="flow" label="流程图" />
        <Small icon="mind" label="思维导图" />
      </ToolStack>
    </RibbonGroup>
    <GroupLine />
    <RibbonGroup title="图表" gap={12}>
      <Big icon="bars" label="全部图表" drop />
      <ToolStack>
        <Small icon="column" drop />
        <Small icon="pie" drop />
      </ToolStack>
      <ToolStack>
        <Small icon="line" drop />
        <Small icon="scatter" drop />
      </ToolStack>
    </RibbonGroup>
    <GroupLine />
    <RibbonGroup title="迷你图"><Big icon="spark" label="迷你图" drop /></RibbonGroup>
    <GroupLine />
    <RibbonGroup title="超链接"><Big icon="link" label="超链接" /></RibbonGroup>
    <GroupLine />
    <RibbonGroup title="符号">
      <Big icon="sqrt" label="公式" drop />
      <Big icon="omega" label="符号" drop />
    </RibbonGroup>
    <GroupLine />
    <RibbonGroup title="更多对象">
      <Big icon="clip" label="附件" drop />
      <ToolStack>
        <Small icon="form" label="窗体" drop />
        <Small icon="camera" label="照相机" />
      </ToolStack>
      <Big icon="store" label="稻壳资源" drop />
    </RibbonGroup>
  </Ribbon>
)

const CellText = ({ row, col, value }) => {
  if (col === 8 && linkedRows.includes(row)) {
    return <CityLink href="#" $small={row === 12}>{value}</CityLink>
  }
  return <>{value}{row === 4 && col === 3 && <Selection />}</>
}

const Sheet = () => (
  <TableWrap>
    <Grid>
      <colgroup>
        <col width="26" />
        {widths.map((w, i) => <col key={i} width={w} />)}
      </colgroup>
      <thead>
        <tr>
          <Corner><svg width="6" height="6"><path d="M6 0v6H0z" fill="#666" /></svg></Corner>
          {letters.map(l => <ColHead key={l} $active={l === 'D'}>{l}</ColHead>)}
        </tr>
      </thead>
      <tbody>
        <tr>
          <RowHead>1</RowHead>
          <Cell colSpan={16} $data>XXX公司员工信息</Cell>
          <Cell /><Cell />
        </tr>
        <tr>
          <RowHead>2</RowHead>
          {headings.map((h, i) => <Cell key={i} $data $head $edge={i === 15}>{h}</Cell>)}
          <Cell /><Cell />
        </tr>
        {staff.map((person, r) => (
          <tr key={r}>
            <RowHead $active={r === 1}>{r + 3}</RowHead>
            {person.map((value, c) => (
              <Cell
                key={c}
                $data
                $last={r === staff.length - 1}
                $band={r % 2 === 0 || c === 15}
                $edge={c === 15}
                $spaced={c === 1}
              >
                <CellText row={r + 3} col={c} value={value} />
              </Cell>
            ))}
            <Cell /><Cell />
          </tr>
        ))}
        <tr>
          <RowHead>27</RowHead>
          {letters.map(l => (
            <Cell key={l}>
              {l === 'O' && (
                <Seal width="38" height="38" viewBox="0 0 38 38">
                  <circle cx="19" cy="19" r="18" />
                  <path id="sealArc" stroke="none" d="M9 20a10 10 0 0 1 20 0" />
                  <text fill="#e03a3a" stroke="none" fontSize="6"><textPath href="#sealArc">有限公司(有</textPath></text>
                </Seal>
              )}
            </Cell>
          ))}
        </tr>
      </tbody>
    </Grid>
  </TableWrap>
)

const sideIcons = [
  { d: <path d="M1 1l4.500 13L8 9.500l4.500 5 2-2L10 8l5-2.500z" /> },
  { off: true, d: <><path d="M0 4h2.500M7 4h9M0 12h9M13.500 12H16" /><circle cx="4.700" cy="4" r="2.200" /><circle cx="11.300" cy="12" r="2.200" /></> },
  { off: true, d: <path d="M4 .8h12M.8 4v12M13.500 4v10H4M11.500 6l2-2.500 2 2.500M6.500 11.500L4 14l2.500 2" /> },
  { box: 24, stroke: 1.7, d: big.store },
  { d: <><path d="M4.500 4.500l2-2 8.500 9-2.500 2.500zM7 7.500L5 9.500" /><path d="M12.500 1l1.500 1.700-1.500 1.700L11 2.700zM3 9.500l1.500 1.700L3 12.900l-1.500-1.700zM3 1.500l1 1-1 1-1-1z" /></> },
  { d: <><path d="M7.500 3.500C5.500 2 3.500 1.500 1 1.500v12c2 0 4 .3 6 1.500M7.500 3.500c2-1.500 4-2 7-2V7M7.500 3.500v5" /><circle cx="10.800" cy="10.500" r="3.300" /><path d="M13 13l2.500 2.500" /></> },
  { d: <><circle cx="8" cy="8" r="7.300" /><path d="M5.800 6.500C5.800 3 10.500 3.300 10.300 6c0 1.800-2.200 2-2.300 4M8 11.300v1.400" /></> },
  { d: <><circle cx="2" cy="8" r="1.500" /><circle cx="8" cy="8" r="1.500" /><circle cx="14" cy="8" r="1.500" /></> },
]

const Side = () => (
  <SideBar>
    <SideButton $short><Dash $width={13} /></SideButton>
    {sideIcons.map((icon, i) => (
      <SideButton key={i} $off={icon.off}><Icon box={icon.box} stroke={icon.stroke}>{icon.d}</Icon></SideButton>
    ))}
  </SideBar>
)

const SheetRow = () => (
  <SheetBar>
    <SheetNav>
      {['M1.500 1v9M9 1L4.500 5.500 9 10', 'M7.500 1L3 5.500 7.500 10', 'M3.500 1L8 5.500 3.500 10', 'M9.500 1v9M2 1l4.500 4.500L2 10'].map(d => (
        <SheetNavButton key={d}><Icon s={11} stroke={1.6}><path d={d} /></Icon></SheetNavButton>
      ))}
    </SheetNav>
    {sheets.map(s => (
      <SheetTab key={s.name} $active={s.active} $tint={s.tint} $ruled={s.ruled}>{s.name}</SheetTab>
    ))}
    <AddSheet aria-label="+"><Icon s={10} stroke={2}><path d="M5 0v10M0 5h10" /></Icon></AddSheet>
    <Spacer />
    <HScroll>
      <Divider $height={8} $color="#a5a7aa" />
      <svg width="5" height="6"><path d="M5 0v6L0 3z" fill="#777" /></svg>
      <HThumb />
      <Spacer />
      <svg width="5" height="6"><path d="M0 0v6l5-3z" fill="#777" /></svg>
      <Divider $height={8} $color="#a5a7aa" />
    </HScroll>
  </SheetBar>
)

const Status = () => {
  const [zoom, setZoom] = React.useState(34)
  return (
    <StatusBar>
      <ReportButton>
        <Svg width="18" height="16" viewBox="0 0 18 16"><path d="M6 15A7 7 0 1 1 15.500 8" /><circle cx="8.500" cy="7.500" r="2" /><circle cx="13" cy="10.500" r="2" /><path d="M9.500 15.500c0-4 7-4 7 0z" /></Svg>
        财务报表管理
        <Svg width="18" height="4" viewBox="0 0 18 4"><path stroke="none" fill="#6b7a90" d="M7 4l3.500-4L14 4z" /></Svg>
      </ReportButton>
      <StatusLine />
      <StatusButton>
        <Icon s={15} box={16}><path d="M3 1v4c0 1.500-2 1.500-2 0M8 1.500C5 .5 5 3 6.500 3.500S8 6 5.500 5M9 1.500h6.500v3H13M13 1.500V14.500H3.500V9M3.500 9H1M6 9.500h4.500v2.500H6z" /></Icon>
      </StatusButton>
      <Spacer />
      <StatusButton><Icon><path d="M.8 8C4 1.800 12 1.800 15.200 8 12 14.200 4 14.200.8 8z" /><circle cx="8" cy="8" r="2.300" /></Icon></StatusButton>
      <StatusButton $spread><Icon s={14} box={16}><path d="M5.500 1h5v3.500h-5zM5.500 11.500h5V15h-5zM1 5.500h3.500v5H1zM11.500 5.500H15v5h-3.500zM6.500 8h3M8 6.500v3" /></Icon><Chev /></StatusButton>
      <StatusLine />
      <StatusButton $active><Icon s={14}><path d="M.6.600h12.800v12.800H.6zM.6 4.500h12.800M5 .6v12.800M5 9h8.400" /></Icon></StatusButton>
      <StatusButton><Icon s={14}><path d="M.6 1.600h12.800v10.800H.6zM7 1.600v10.800" /></Icon></StatusButton>
      <StatusButton><Icon s={14}><path d="M.6 1.600h8.800v7.800H.6zM11.400 1.600h2v11.800H.6v-1.500" /></Icon></StatusButton>
      <StatusLine />
      <ZoomSelect>70% <Chev /></ZoomSelect>
      <StatusButton aria-label="-"><Icon s={12} stroke={2}><path d="M0 6h12" /></Icon></StatusButton>
      <ZoomRange type="range" aria-label="70%" value={zoom} onChange={e => setZoom(e.target.value)} />
      <StatusButton aria-label="+"><Icon s={12} stroke={2}><path d="M1 6h10M6 1v10" /></Icon></StatusButton>
      <StatusButton><Icon s={13}><path d="M8 .6h4.400V5M12.400.6L8 5M5 12.400H.6V8M.6 12.400L5 8M.6 4V.6H4M12.400 9v3.400H9" /></Icon></StatusButton>
    </StatusBar>
  )
}

const Floating = () => (
  <FloatBar>
    <FloatRows>
      <FloatRow>
        <SelectBox $width={130} $left>
          <Select aria-label="等线"><option>等线</option></Select>
          <ChevDown />
        </SelectBox>
        <SelectBox $width={62}>
          <Select aria-label="16"><option>16</option></Select>
          <ChevDown />
        </SelectBox>
        <FloatTool $width={26}><Icon><path d="M1 14L5.500 3 10 14M2.500 10.500h6" /><path stroke={blue} strokeWidth="1.300" d="M9 4.500h6.500M12.300 1v7" /></Icon></FloatTool>
        <FloatTool $width={26}><Icon><path d="M1 14L5.500 3 10 14M2.500 10.500h6" /><path stroke={blue} strokeWidth="1.300" d="M9 2.500h6.500" /></Icon></FloatTool>
      </FloatRow>
      <FloatRow>
        <FloatTool $width={24}><Icon s={12} stroke={1.8}><path d="M2.500 1.500v9.500h4.200a2.500 2.500 0 0 0 0-5H2.500M2.500 1.500h3.700a2.200 2.200 0 0 1 0 4.500" /></Icon></FloatTool>
        <FloatTool $width={42}>
          <Icon><path d="M4 7l5-4.500L13 7 8.500 10 5 10zM6 4.500C5 1 9 0 9 3M13.500 7v2.500" /><rect stroke="none" fill="#ff0" y="12" width="16" height="4" rx="1" /><path stroke="#c9c900" strokeWidth=".6" d="M0 15.700h16" /></Icon>
          <Chev />
        </FloatTool>
        <FloatTool $width={42}>
          <Icon><path d="M4 10L8 1l4 9M5.500 7h5" /><rect stroke="none" fill="#f00" y="12" width="16" height="4" rx="1" /></Icon>
          <Chev />
        </FloatTool>
        <AlignTool>
          <PlainButton><Icon s={14}><path d="M1 2h12M3.500 7h7M1 12h12" /></Icon></PlainButton>
          <PlainButton><Chev /></PlainButton>
        </AlignTool>
        <FloatTool $width={42}><Icon s={14}><path d="M.6.600h12.800v12.800H.6zM7 .6v12.800M.6 7h12.800" /></Icon><Chev /></FloatTool>
        <FloatTool $width={26}><Icon>{menuIcon.brush}</Icon></FloatTool>
        <FloatTool $width={26}><Icon><path d="M6 14.500H1v-13h14V8M3.500 5h9M3.500 8h9M3.500 11h4" /><path stroke={green} d="M15 10v4.500H9.500c3 0 3-2 3-4" /></Icon></FloatTool>
      </FloatRow>
    </FloatRows>
    <FloatSide>
      <FloatBig>
        <Svg width="20" height="18" viewBox="0 0 20 18"><path d="M.6.600h18.800v16.800H.6zM.6 6.500h18.800M7 .6v6M13 .6v6" /><path stroke={green} d="M3 12h14" /></Svg>
        <BigLabel>合并<Chev /></BigLabel>
      </FloatBig>
      <FloatBig>
        <Svg width="18" height="18" viewBox="0 0 18 18"><path d="M16.500 3.500V.6H1L8.500 9 1 17.400h15.500v-3" /></Svg>
        <BigLabel>求和<Chev /></BigLabel>
      </FloatBig>
    </FloatSide>
  </FloatBar>
)

const Item = ({ item }) => (
  <MenuItem $hover={item.hover}>
    <ItemIcon>
      {item.icon === 'linkItem' && <Icon s={17} box={24} stroke={1.6}>{big.link}</Icon>}
      {menuIcon[item.icon] && <Icon>{menuIcon[item.icon]}</Icon>}
    </ItemIcon>
    {item.text}
    <Spacer />
    {item.keys && <Shortcut>{item.keys}</Shortcut>}
    {(item.more || item.split) && (
      <ItemTail $split={item.split}>
        {item.brushes
          ? <Svg width="16" height="16" viewBox="0 0 16 16" color="#333">{menuIcon.brushes}</Svg>
          : <Icon s={12} stroke={1.3}><path d="M3.500 1.500L8 6l-4.500 4.500" /></Icon>}
      </ItemTail>
    )}
  </MenuItem>
)

const CellMenu = () => (
  <ContextMenu>
    <ClipRow>
      <ClipButton><Icon s={20}><path stroke={blue} d="M7 15.500H.6V.6h11V3" /><path d="M8.600 4.600h6l5 5v9.800h-11zM14.500 4.600v5h5" /></Icon></ClipButton>
      <ClipButton><Icon s={20}><path d="M4 1.500l9 11.500M16 1.500L7 13" /><circle cx="4" cy="15.500" r="3.400" stroke={blue} /><circle cx="16" cy="15.500" r="3.400" stroke={blue} /></Icon></ClipButton>
      <ClipButton><Icon s={20}><path d="M4.500 2.600H.6v16.800H10M12 2.600h4V7M4.500 5.500v-3h2C6.500 0 10 0 10 2.500h2.500v3zM19.400 8v11.400" /><path stroke={blue} d="M12 9.600h5v9h-5z" /></Icon></ClipButton>
      <ClipButton><Icon s={20}><path d="M4.500 2.600H.6v16.800H9M12 2.600h4V7M4.500 5.500v-3h2C6.500 0 10 0 10 2.500h2.500v3z" /><path stroke={blue} d="M14 10.500h5.500M14 14.500h5.500M14 18.500h5.500M11 10.500h1.500M11 14.500h1.500M11 18.500h1.500" /></Icon></ClipButton>
    </ClipRow>
    {menuSections.map((section, i) => (
      <React.Fragment key={i}>
        <MenuLine />
        {section.map(item => <Item key={item.text} item={item} />)}
      </React.Fragment>
    ))}
  </ContextMenu>
)

const Arrow = ({ from, to }) => {
  const length = Math.hypot(to[0] - from[0], to[1] - from[1])
  const angle = Math.atan2(to[1] - from[1], to[0] - from[0]) * 180 / Math.PI
  return (
    <g filter="url(#shade)">
      <g transform={`translate(${from[0]} ${from[1]}) rotate(${angle})`} stroke="#d40000" strokeWidth=".5" fill="#fb0505">
        <path d={`M0 -1.500H${length - 24}L${length - 27} -7L${length} 0L${length - 27} 7L${length - 24} 1.500H0z`} />
      </g>
    </g>
  )
}

const Overlay = () => (
  <Marks>
    <defs>
      <filter id="shade" filterUnits="userSpaceOnUse" x="0" y="0" width="100%" height="100%">
        <feDropShadow dx="3" dy="3" stdDeviation="2" floodColor="#000" floodOpacity="0.55" />
      </filter>
    </defs>
    <Arrow from={[235, 230]} to={[353, 69]} />
    <Arrow from={[312, 342]} to={[432, 678]} />
    <Arrow from={[859, 316]} to={[866, 144]} />
    <path d="M507.500 692v15l3.500-3 2.500 5.500 3-1.500-2.500-5h4.500z" fill="#fff" stroke="#223" />
  </Marks>
)

const App = () => {
  return (
    <Desktop>
      <GlobalStyle />
      <Window>
        <TitleRow />
        <MenuRow />
        <RibbonBar />
        <Body>
          <Main>
            <FormulaBar>
              <NameBox>
                <NameInput aria-label="D4" defaultValue="D4" />
                <ChevDown />
              </NameBox>
              <FormulaBox>
                <Icon><circle cx="7" cy="7" r="6" /><path d="M4.500 5.500h5M4.500 8.500h5M11.500 11.500l4 4" /></Icon>
                <FormulaMark>fx</FormulaMark>
                <Divider $height={18} />
                <FormulaInput aria-label="fx" defaultValue="郑二" />
              </FormulaBox>
            </FormulaBar>
            <SheetArea>
              <Sheet />
              <VScroll>
                <Dash $width={8} />
                <svg width="6" height="5"><path d="M0 5h6L3 0z" fill="#666" /></svg>
                <VThumb />
                <Spacer />
                <svg width="6" height="5"><path d="M0 0h6L3 5z" fill="#666" /></svg>
              </VScroll>
            </SheetArea>
            <SheetRow />
          </Main>
          <Side />
        </Body>
        <Status />
      </Window>
      <Floating />
      <CellMenu />
      <Overlay />
      <Brand>
        <svg width="42" height="40" viewBox="0 0 42 40">
          <path fill="#4aa3e0" d="M41 2C24 0 2 12 1 27c0 5 3 8 6 9-2-12 10-26 34-34z" />
          <path fill="#4088cc" d="M11 32c-3-9 6-18 19-18-8 2-14 6-13 11 1 3 6 3 8 0-1 6-9 10-14 7z" />
          <path fill="#5bbf63" d="M28 16c9-3 15 0 13 7-3 10-19 16-36 16 16-3 31-12 23-23z" />
          <path fill="#d9d94a" d="M5 39c8-1 17-4 22-9-3 6-12 10-22 9z" />
        </svg>
        <div>
          <BrandName>极光下载站</BrandName>
          <BrandText>www.xz7.com</BrandText>
        </div>
      </Brand>
    </Desktop>
  )
}

export default App
